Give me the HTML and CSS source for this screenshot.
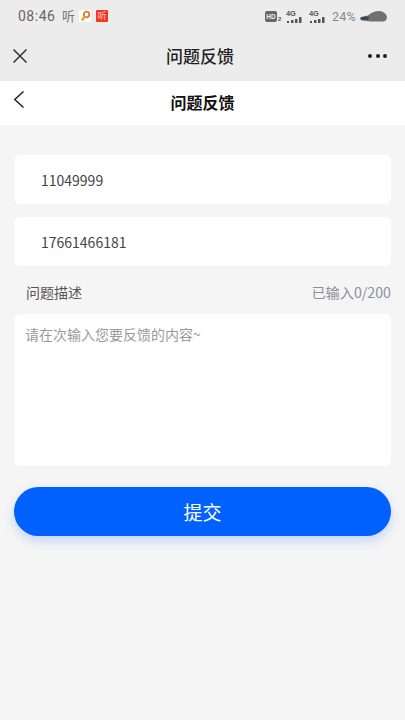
FILE: index.html
```html
<!DOCTYPE html>
<html lang="zh">
<head>
<meta charset="utf-8">
<title>问题反馈</title>
<link rel="stylesheet" href="styles.css">
</head>
<body>
<div class="shell">
  <div class="status">
    <div class="status-left">
      <span class="time">08:46</span>
      <span class="ting">听</span>
      <span class="key-box">
        <svg width="11" height="12" viewBox="0 0 11 12"><circle cx="6.500" cy="4.500" r="2.800" fill="#fff" stroke="#e8762a" stroke-width="1.800"/><path d="M4.500 6.500 2 10.500" stroke="#eda033" stroke-width="2.400"/></svg>
      </span>
      <span class="red-box">听</span>
    </div>
    <div class="status-right">
      <span class="hd"><span class="hd-box">HD</span><span class="hd-sub">2</span></span>
      <span class="sig"><span class="sig-t">4G</span><svg width="18" height="8" viewBox="0 0 18 8"><path d="M1 6h2v2H1zM5 5h2.500v3H5zM9 4h2.500v4H9zM13 2h2.500v6H13z" fill="#555"/></svg></span>
      <span class="sig"><span class="sig-t">4G</span><svg width="18" height="8" viewBox="0 0 18 8"><path d="M1 6h2v2H1zM5 5h2.500v3H5zM9 4h2.500v4H9zM13 2h2.500v6H13z" fill="#555"/></svg></span>
      <span class="pct">24%</span>
      <svg class="car" width="27" height="13" viewBox="0 0 27 13"><path d="M0 8C1 6.500 5 6 8 5.500 11 2.500 15 1 19 1 23 1 26 3.500 27 7 27 9.500 25.500 11.500 23 11.500H15C10 11.500 5 11 2 10.500.5 10 0 9.200 0 8Z" fill="#717171"/><path d="M.6 7.700C3 6.900 6 6.700 9 6.700L8.500 9.700 1.500 9.700Z" fill="#34465a"/></svg>
    </div>
  </div>
  <header class="appbar">
    <svg class="close" width="16" height="16" viewBox="0 0 16 16"><path d="M1.500 1.500 14.500 14.500M14.500 1.500 1.500 14.500" stroke="#333" stroke-width="1.500" fill="none"/></svg>
    <h1 class="appbar-title">问题反馈</h1>
    <div class="dots"><i></i><i></i><i></i></div>
  </header>
  <nav class="nav">
    <svg class="back" width="12" height="20" viewBox="0 0 12 20"><path d="M10.500 1.500 1.800 9.500 10.500 17.500" stroke="#222" stroke-width="1.500" fill="none"/></svg>
    <h2 class="nav-title">问题反馈</h2>
  </nav>
  <main class="content">
    <div class="field">11049999</div>
    <div class="field field-second">17661466181</div>
    <div class="desc-row">
      <span class="desc-label">问题描述</span>
      <span class="desc-count">已输入0/200</span>
    </div>
    <div class="textarea">请在次输入您要反馈的内容~</div>
    <button class="submit" type="button">提交</button>
  </main>
</div>
</body>
</html>
```
FILE: styles.css
```css
* { box-sizing: border-box; margin: 0; padding: 0; }
html, body { height: 100%; }
body {
  font-family: "Noto Sans CJK SC", "Noto Sans", sans-serif;
  background: #f5f5f5;
  color: #333;
}
.shell { width: 405px; height: 720px; overflow: hidden; background: #f5f5f5; }
.status {
  height: 32px;
  background: #ececec;
  display: flex;
  justify-content: space-between;
  align-items: center;
  padding: 0 18px 0 18px;
}
.status-left { display: flex; align-items: center; }
.time { font-family: Roboto, sans-serif; font-size: 14px; color: #666; letter-spacing: 0.5px; width: 44px; }
.ting { font-size: 13px; line-height: 14px; color: #777; width: 17px; }
.key-box { width: 12px; height: 12px; background: #fff; display: flex; align-items: center; justify-content: center; }
.red-box { width: 12px; height: 12px; background: #ee3a1c; color: #fbd; font-size: 9px; line-height: 12px; text-align: center; margin-left: 5px; border-radius: 1px; }
.status-right { display: flex; align-items: center; }
.hd { display: flex; align-items: flex-end; width: 18px; margin-right: 3px; }
.hd-box { width: 12px; height: 11px; background: #666; color: #eee; border-radius: 2px; font: 700 6.500px/11px "Liberation Sans", sans-serif; text-align: center; }
.hd-sub { font: 700 6px/6px "Liberation Sans", sans-serif; color: #555; margin-left: 1px; }
.sig { display: flex; flex-direction: column; width: 18px; margin-right: 5px; }
.sig-t { font: 700 7.500px/8px "Liberation Sans", sans-serif; color: #555; }
.sig svg { margin-top: -3px; }
.pct { font-family: Roboto, sans-serif; font-size: 12.500px; color: #888; letter-spacing: 0.3px; margin-right: 4px; }
.car { display: block; }
.appbar {
  height: 49px;
  background: #ececec;
  display: grid;
  grid-template-columns: 1fr auto 1fr;
  align-items: center;
  padding: 0 18px 2px 13px;
}
.close { justify-self: start; margin-left: -1px; }
.appbar-title { font-size: 17px; font-weight: 500; color: #222; line-height: 24px; }
.dots { display: flex; gap: 3.500px; justify-self: end; }
.dots i { display: block; width: 4px; height: 4px; border-radius: 50%; background: #222; }
.nav {
  height: 44px;
  background: #fff;
  display: flex;
  align-items: center;
  justify-content: center;
  padding-bottom: 2px;
  position: relative;
}
.back { position: absolute; left: 13px; top: 9px; }
.nav-title { font-size: 16px; font-weight: 700; color: #111; line-height: 24px; }
.content { padding: 30px 14px 0; }
.field {
  height: 49px;
  background: #fff;
  border-radius: 6px;
  padding-left: 27px;
  font-size: 14px;
  line-height: 51px;
  color: #444;
}
.field-second { margin-top: 13px; }
.desc-row {
  display: flex;
  justify-content: space-between;
  align-items: center;
  height: 48px;
  padding-left: 12px;
  padding-top: 4px;
}
.desc-label { font-size: 14px; color: #555; }
.desc-count { font-size: 14.200px; color: #8a90a0; }
.textarea {
  height: 152px;
  background: #fff;
  border-radius: 6px;
  padding: 9px 11px;
  font-size: 14px;
  line-height: 22px;
  color: #9a9a9a;
}
.submit {
  display: block;
  width: 100%;
  height: 49px;
  margin-top: 21px;
  border: 0;
  border-radius: 25px;
  background: #0061ff;
  color: #fff;
  font-family: inherit;
  font-size: 19px;
  box-shadow: 0 5px 12px rgba(0, 97, 255, 0.2);
}
```
